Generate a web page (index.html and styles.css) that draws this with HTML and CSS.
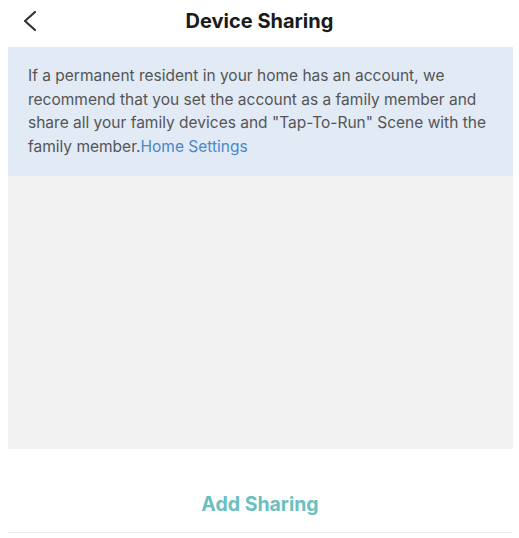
FILE: index.html
```html
<!DOCTYPE html>
<html lang="en">
<head>
    <meta charset="UTF-8">
    <meta name="viewport" content="width=device-width, initial-scale=1.0">
    <title>Device Sharing</title>
    <link rel="stylesheet" href="styles.css">
</head>
<body>
    <header class="nav-bar">
        <button class="back-btn" aria-label="Back">
            <svg width="16" height="22" viewBox="0 0 16 22">
                <path d="M13 2 L3 11 L13 20" fill="none" stroke="#333" stroke-width="2.2" stroke-linecap="round" stroke-linejoin="round"/>
            </svg>
        </button>
        <h1>Device Sharing</h1>
    </header>
    <main class="content">
        <div class="notice">
            If a permanent resident in your home has an account, we recommend that you set the account as a family member and share all your family devices and "Tap-To-Run" Scene with the family member.<a href="#" class="notice-link">Home Settings</a>
        </div>
        <div class="share-list"></div>
    </main>
    <div class="actions">
        <button class="add-btn">Add Sharing</button>
    </div>
</body>
</html>
```

FILE: styles.css
```css
body {
    margin: 0;
    font-family: Inter, "Liberation Sans", Arial, sans-serif;
    background-color: white;
}

.nav-bar {
    position: relative;
    height: 47px;
    display: flex;
    align-items: center;
    justify-content: center;
}

.back-btn {
    position: absolute;
    left: 22px;
    top: 10px;
    background: none;
    border: none;
    padding: 0;
    cursor: pointer;
}

.nav-bar h1 {
    margin: 0;
    margin-top: -5px;
    font-size: 20px;
    font-weight: 700;
    color: #1a1a1a;
}

.content {
    margin: 0 6px 0 8px;
}

.notice {
    background-color: #e1eaf5;
    padding: 17px 20px 18px 20px;
    font-size: 15.5px;
    line-height: 23.5px;
    color: #555;
}

.notice-link {
    color: #4a86c8;
    text-decoration: none;
}

.share-list {
    background-color: #f2f2f2;
    height: 273px;
}

.actions {
    margin: 0 7px 0 8px;
    height: 83px;
    border-bottom: 1px solid #ededed;
    display: flex;
    justify-content: center;
    align-items: flex-end;
}

.add-btn {
    background: none;
    border: none;
    padding: 0;
    margin-bottom: 16px;
    font-family: inherit;
    font-size: 19.5px;
    font-weight: 700;
    color: #6bbfbf;
    cursor: pointer;
}
```
